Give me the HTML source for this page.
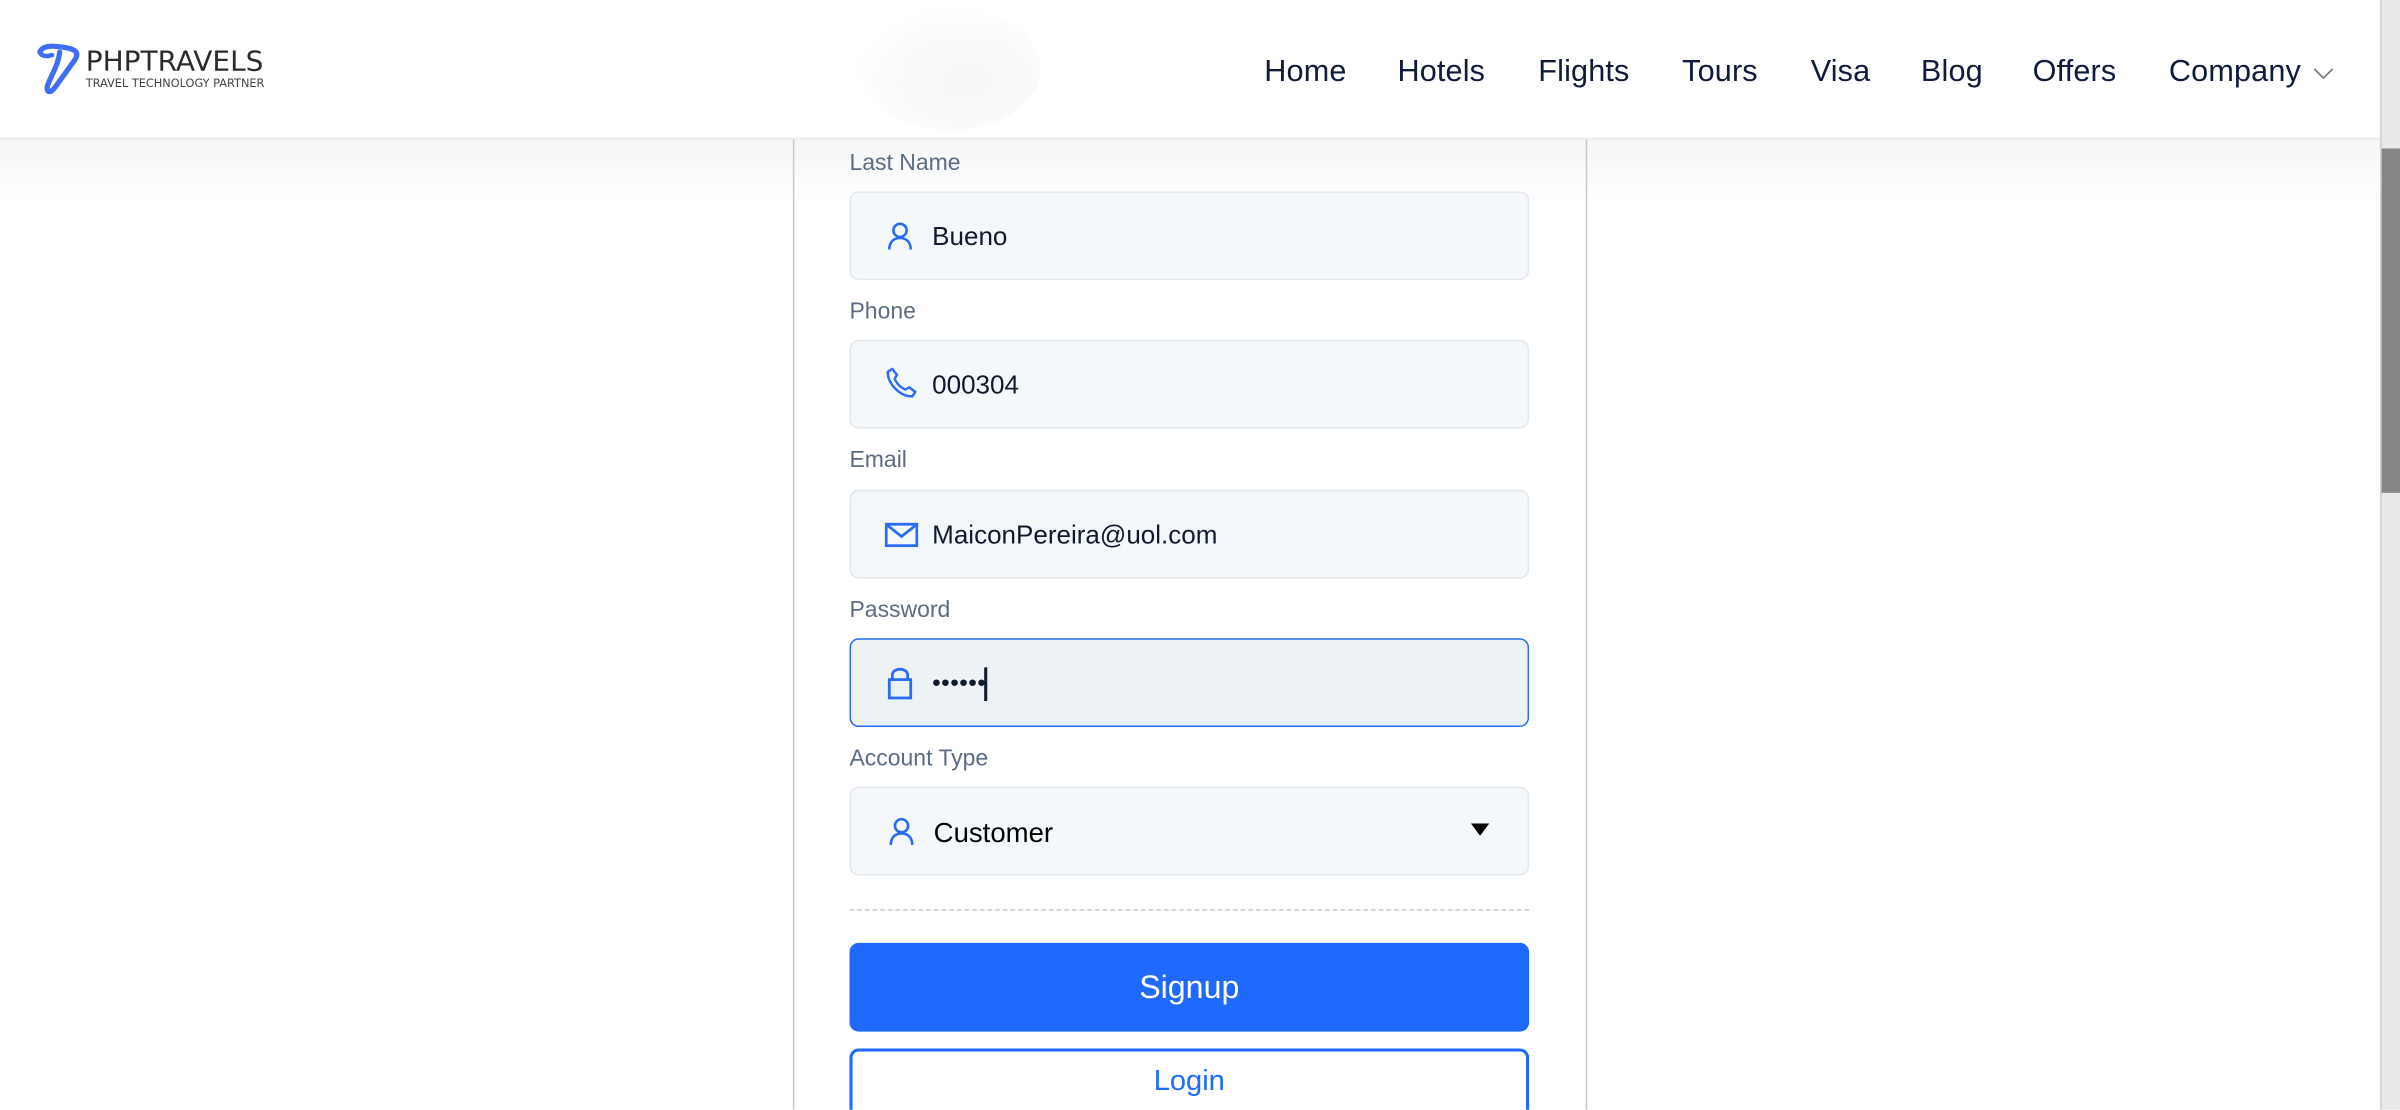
<!DOCTYPE html>
<html><head><meta charset="utf-8">
<style>
html,body{margin:0;padding:0;width:2400px;height:1110px;overflow:hidden;background:#fff;font-family:"Liberation Sans",Arial,sans-serif;}
#root{position:absolute;left:0;top:0;width:1568px;height:725px;transform:scale(1.530612);transform-origin:0 0;background:#fff;overflow:hidden;}
.abs{position:absolute;}
.hdr{left:0;top:0;width:1555px;height:90px;background:#fff;border-bottom:1px solid #ececec;}
.shadow{left:0;top:91px;width:1555px;height:40px;background:linear-gradient(#f4f5f6,#fff);}
.blob{left:560px;top:5px;width:120px;height:80px;border-radius:50%;background:radial-gradient(ellipse at 60% 60%,#f6f7f9 0%,#fbfbfc 50%,rgba(255,255,255,0) 75%);}
.nav{top:34px;font-size:20px;color:#0e1b3b;line-height:26px;letter-spacing:0.1px;}
.vline{top:91px;width:1px;height:640px;background:#c9c9c9;}
.lbl{left:555px;font-size:15px;color:#5c6c84;line-height:18px;}
.inp{left:555px;width:442px;height:56px;background:#f5f8fa;border:1px solid #e3e8ee;border-radius:6px;}
.ic{position:absolute;left:22px;top:18px;}
.val{position:absolute;left:53px;top:19px;font-size:17px;color:#0e1b2e;line-height:20px;}
.sb{left:1555px;top:0;width:13px;height:725px;background:#e8e8e8;border-left:1px solid #cfcfcf;box-sizing:border-box;}
.thumb{left:1556px;top:97px;width:12px;height:225px;background:#868686;}
</style></head><body>
<div id="root">
<div class="abs shadow"></div>
<div class="abs hdr"></div>
<div class="abs blob"></div>
<!-- logo -->
<svg class="abs" style="left:22px;top:26px" width="34" height="38" viewBox="0 0 34 38">
<path d="M4 8 C6 3 14 4 20 5 C27 6 30 8 27 13 L14 31 C11 35 8 35 9 30 C11 24 16 17 17 8" fill="none" stroke="#3f6ef5" stroke-width="3.4" stroke-linecap="round" stroke-linejoin="round"/>
<path d="M4 8 C5 11 9 11 12 10" fill="none" stroke="#3f6ef5" stroke-width="3" stroke-linecap="round"/>
</svg>
<div class="abs" style="left:56px;top:30px;font-size:18.3px;letter-spacing:0px;color:#2b2b2b;font-family:'DejaVu Sans',sans-serif;line-height:22px;">PHPTRAVELS</div>
<div class="abs" style="left:56px;top:50px;font-size:7.4px;color:#444;font-family:'DejaVu Sans',sans-serif;line-height:9px;">TRAVEL TECHNOLOGY PARTNER</div>
<!-- nav -->
<div class="abs nav" style="left:826px">Home</div>
<div class="abs nav" style="left:913px">Hotels</div>
<div class="abs nav" style="left:1005px">Flights</div>
<div class="abs nav" style="left:1099px">Tours</div>
<div class="abs nav" style="left:1183px">Visa</div>
<div class="abs nav" style="left:1255px">Blog</div>
<div class="abs nav" style="left:1328px">Offers</div>
<div class="abs nav" style="left:1417px">Company</div>
<svg class="abs" style="left:1511px;top:43px" width="14" height="9" viewBox="0 0 14 9"><path d="M1 2 L7 8 L13 2" fill="none" stroke="#777" stroke-width="1.1"/></svg>

<div class="abs vline" style="left:518px"></div>
<div class="abs vline" style="left:1036px"></div>

<div class="abs lbl" style="top:98px">Last Name</div>
<div class="abs inp" style="top:125px">
<svg class="ic" width="20" height="20" viewBox="0 0 20 20"><circle cx="10" cy="6.5" r="4.3" fill="none" stroke="#2a6cf6" stroke-width="1.7"/><path d="M3 19 C3 14 6 11.5 10 11.5 C14 11.5 17 14 17 19" fill="none" stroke="#2a6cf6" stroke-width="1.7"/></svg>
<div class="val">Bueno</div></div>

<div class="abs lbl" style="top:195px">Phone</div>
<div class="abs inp" style="top:222px">
<svg class="ic" width="22" height="22" viewBox="0 0 22 22" style="top:16px"><path d="M5 2 L8 6 L6.5 8.5 C8 12 10 14 13.5 15.5 L16 14 L20 17 L18 20 C10 20 2 12 2 4 Z" fill="none" stroke="#2a6cf6" stroke-width="1.6" stroke-linejoin="round"/></svg>
<div class="val">000304</div></div>

<div class="abs lbl" style="top:292px">Email</div>
<div class="abs inp" style="top:320px">
<svg class="ic" width="22" height="18" viewBox="0 0 22 18" style="top:20px"><rect x="1" y="1.5" width="20" height="14" fill="none" stroke="#2a6cf6" stroke-width="1.8"/><path d="M1.5 2 L11 9.5 L20.5 2" fill="none" stroke="#2a6cf6" stroke-width="1.8"/></svg>
<div class="val">MaiconPereira@uol.com</div></div>

<div class="abs lbl" style="top:390px">Password</div>
<div class="abs inp" style="top:417px;background:#edf2f6;border-color:#2a6cf6;">
<svg class="ic" width="20" height="24" viewBox="0 0 20 24" style="top:16px;left:22px"><rect x="3" y="10" width="14" height="12" fill="none" stroke="#2a6cf6" stroke-width="1.8"/><path d="M5 10 V7 C5 2 15 2 15 7 V10" fill="none" stroke="#2a6cf6" stroke-width="1.8"/></svg>
<div class="val" style="font-size:16px;letter-spacing:0.3px;top:19px">••••••</div>
<div style="position:absolute;left:87px;top:18px;width:1.5px;height:22px;background:#0e1b2e"></div></div>

<div class="abs lbl" style="top:487px">Account Type</div>
<div class="abs inp" style="top:514px">
<svg class="ic" width="20" height="20" viewBox="0 0 20 20" style="left:23px"><circle cx="10" cy="6.5" r="4.3" fill="none" stroke="#2a6cf6" stroke-width="1.7"/><path d="M3 19 C3 14 6 11.5 10 11.5 C14 11.5 17 14 17 19" fill="none" stroke="#2a6cf6" stroke-width="1.7"/></svg>
<div class="val" style="left:54px;font-size:18px;color:#000">Customer</div>
<svg style="position:absolute;left:405px;top:23px" width="12" height="9" viewBox="0 0 12 9"><path d="M0 0 H12 L6 8 Z" fill="#000"/></svg>
</div>

<div class="abs" style="left:555px;top:594px;width:444px;border-top:1px dashed #cfcfcf;"></div>
<div class="abs" style="left:555px;top:616px;width:444px;height:58px;background:#1f69fe;border-radius:6px;color:#fff;font-size:21px;text-align:center;line-height:60px;">Signup</div>
<div class="abs" style="left:555px;top:685px;width:440px;height:60px;border:2px solid #1f69fe;border-radius:6px;color:#1f69fe;font-size:19px;text-align:center;line-height:40px;">Login</div>

<div class="abs sb"></div>
<div class="abs thumb"></div>
</div>
</body></html>
